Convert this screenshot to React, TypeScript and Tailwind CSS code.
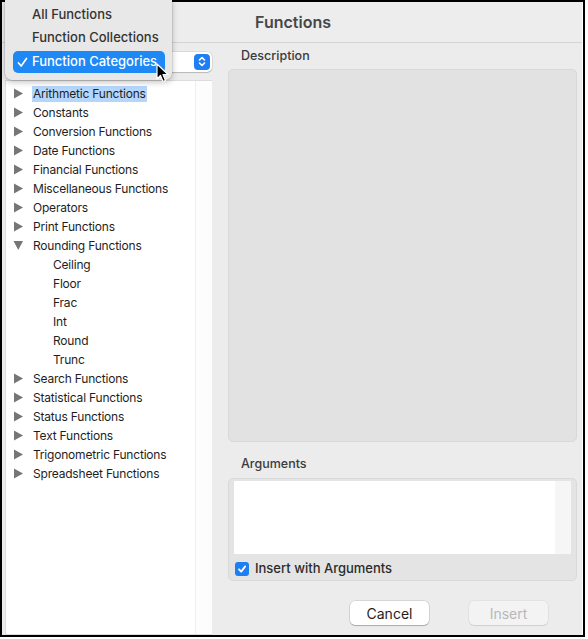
import React from "react";

const font = { fontFamily: "Inter, 'Liberation Sans', sans-serif" };

type Row = { label: string; kind: "closed" | "open" | "leaf"; selected?: boolean };

const rows: Row[] = [
  { label: "Arithmetic Functions", kind: "closed", selected: true },
  { label: "Constants", kind: "closed" },
  { label: "Conversion Functions", kind: "closed" },
  { label: "Date Functions", kind: "closed" },
  { label: "Financial Functions", kind: "closed" },
  { label: "Miscellaneous Functions", kind: "closed" },
  { label: "Operators", kind: "closed" },
  { label: "Print Functions", kind: "closed" },
  { label: "Rounding Functions", kind: "open" },
  { label: "Ceiling", kind: "leaf" },
  { label: "Floor", kind: "leaf" },
  { label: "Frac", kind: "leaf" },
  { label: "Int", kind: "leaf" },
  { label: "Round", kind: "leaf" },
  { label: "Trunc", kind: "leaf" },
  { label: "Search Functions", kind: "closed" },
  { label: "Statistical Functions", kind: "closed" },
  { label: "Status Functions", kind: "closed" },
  { label: "Text Functions", kind: "closed" },
  { label: "Trigonometric Functions", kind: "closed" },
  { label: "Spreadsheet Functions", kind: "closed" },
];

function Tri({ open }: { open: boolean }) {
  return (
    <svg width="11" height="11" viewBox="0 0 11 11" className="shrink-0">
      {open ? (
        <polygon points="0.5,1 10,1 5.25,10" fill="#767676" />
      ) : (
        <polygon points="1,0.5 10,5.5 1,10.5" fill="#767676" />
      )}
    </svg>
  );
}

export default function App() {
  return (
    <div className="w-[588px] h-[639px] bg-white relative overflow-hidden" style={font}>
      <div className="w-[585px] h-[637px] border-2 border-black bg-white">
        <div className="w-[580px] h-full bg-[#ececec] flex flex-col">
          {/* Title bar */}
          <div className="h-[41px] shrink-0 flex items-center justify-center border-b border-[#d3d3d3] bg-[#ededed]">
            <span className="text-[16px] font-semibold text-[#474747] ml-[2px]">Functions</span>
          </div>
          <div className="flex flex-1 min-h-0">
            {/* Left column */}
            <div className="w-[210px] shrink-0 flex flex-col pl-[3px]">
              <div className="h-[37px] shrink-0 flex items-center justify-end">
                <div className="w-[200px] h-[20px] bg-white rounded-[5px] shadow-[0_0_0_0.5px_rgba(0,0,0,0.15),0_1px_1px_rgba(0,0,0,0.15)] flex items-center justify-end pr-[2px]">
                  <div className="w-[16px] h-[16px] rounded-[4px] bg-[#1f7ff2] flex items-center justify-center">
                    <svg width="8" height="11" viewBox="0 0 8 11">
                      <path d="M1.5 4 L4 1.5 L6.5 4 M1.5 7 L4 9.5 L6.5 7" stroke="white" strokeWidth="1.6" fill="none" strokeLinecap="round" strokeLinejoin="round" />
                    </svg>
                  </div>
                </div>
              </div>
              <div className="flex-1 bg-white border border-[#dcdcdc] border-r-0 flex">
                <div className="w-[190px] pt-[3px] border-r border-[#f0f0f0]">
                  {rows.map((r) => (
                    <div key={r.label} className="h-[19px] flex items-center text-[12px] text-[#1e1e1e] tracking-[-0.2px]">
                      {r.kind === "leaf" ? (
                        <span className="pl-[47px]">{r.label}</span>
                      ) : (
                        <>
                          <span className="pl-[7px] w-[27px] flex">
                            <Tri open={r.kind === "open"} />
                          </span>
                          <span className={r.selected ? "bg-[#b5d6fb] px-[1px] h-[16px] leading-[16px] -ml-[1px]" : ""}>
                            {r.label}
                          </span>
                        </>
                      )}
                    </div>
                  ))}
                </div>
                <div className="flex-1 bg-[#fdfdfd]" />
              </div>
            </div>
            {/* Right column */}
            <div className="flex-1 flex flex-col pl-[16px] pr-[5px]">
              <div className="h-[26px] flex items-center pl-[13px] text-[12.5px] font-medium text-[#3b3b3b]">Description</div>
              <div className="h-[373px] rounded-[5px] bg-[#e2e2e2] border border-[#d8d8d8]" />
              <div className="h-[36px] flex items-end pb-[4px] pl-[13px] text-[12.5px] font-medium text-[#3b3b3b]">Arguments</div>
              <div className="h-[103px] rounded-[5px] bg-[#e4e4e4] border border-[#d9d9d9] px-[5px] pt-[2px] flex flex-col">
                <div className="h-[73px] bg-white flex">
                  <div className="flex-1" />
                  <div className="w-[16px] bg-[#f6f6f6]" />
                </div>
                <div className="flex items-center gap-[6px] mt-[5px] ml-[1px]">
                  <div className="w-[14px] h-[14px] rounded-[3px] bg-[#1f7ff2] flex items-center justify-center">
                    <svg width="10" height="10" viewBox="0 0 10 10">
                      <path d="M2 5.3 L4.2 7.6 L8.2 2.4" stroke="white" strokeWidth="1.8" fill="none" strokeLinecap="round" strokeLinejoin="round" />
                    </svg>
                  </div>
                  <span className="text-[13px] font-medium text-[#2b2b2b]">Insert with Arguments</span>
                </div>
              </div>
              <div className="flex justify-end gap-[40px] pr-[29px] mt-[20px]">
                <div className="w-[79px] h-[24px] rounded-[5px] bg-white shadow-[0_0_0_0.5px_rgba(0,0,0,0.18),0_1px_1px_rgba(0,0,0,0.2)] flex items-center justify-center text-[14px] text-[#1e1e1e]">
                  Cancel
                </div>
                <div className="w-[79px] h-[24px] rounded-[5px] bg-[#f3f3f3] shadow-[0_0_0_0.5px_rgba(0,0,0,0.08),0_1px_1px_rgba(0,0,0,0.08)] flex items-center justify-center text-[14px] text-[#b8b8b8]">
                  Insert
                </div>
              </div>
            </div>
          </div>
        </div>
      </div>

      {/* Popup menu overlay */}
      <div className="absolute left-[5px] top-0 w-[167px] h-[80px] bg-[#e8e8e8] rounded-b-[7px] shadow-[0_2px_6px_rgba(0,0,0,0.25),0_0_0_0.5px_rgba(0,0,0,0.15)] text-[13px] font-medium text-[#333]">
        <div className="absolute left-[27px] top-[6px] leading-[16px]">All Functions</div>
        <div className="absolute left-[27px] top-[29px] leading-[16px]">Function Collections</div>
        <div className="absolute left-[8px] top-[51px] w-[152px] h-[22px] rounded-[5px] bg-[#1e88f5] text-white flex items-center">
          <svg className="ml-[4px] shrink-0" width="11" height="11" viewBox="0 0 11 11">
            <path d="M1.5 6 L4.2 9 L9.5 1.5" stroke="white" strokeWidth="1.7" fill="none" strokeLinecap="round" strokeLinejoin="round" />
          </svg>
          <span className="pl-[4px]">Function Categories</span>
        </div>
      </div>
      {/* Cursor */}
      <svg className="absolute left-[156px] top-[63px]" width="14" height="21" viewBox="0 0 14 21">
        <path d="M1 1 L1 16 L4.5 12.5 L7 18.5 L9.5 17.5 L7 11.5 L12 11.5 Z" fill="black" stroke="white" strokeWidth="1.2" strokeLinejoin="round" />
      </svg>
    </div>
  );
}
